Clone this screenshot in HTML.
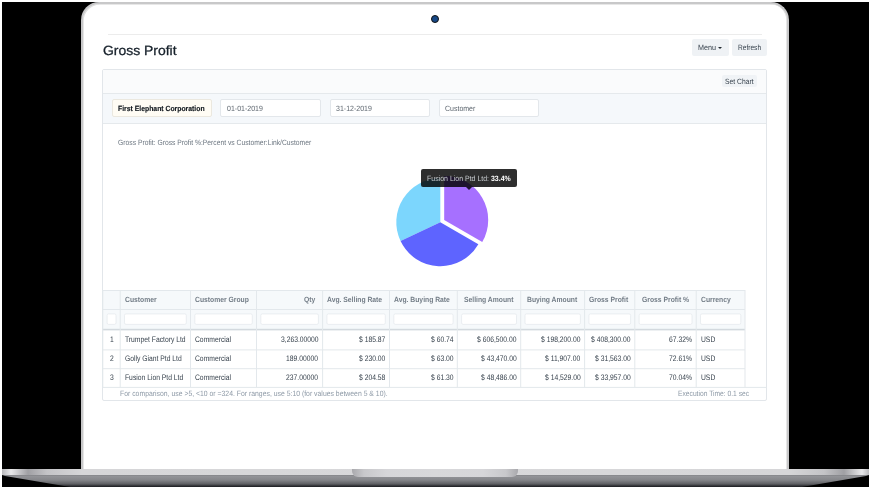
<!DOCTYPE html>
<html><head><meta charset="utf-8">
<style>
*{box-sizing:border-box;margin:0;padding:0}
html,body{width:870px;height:490px;overflow:hidden;background:#fff}
body{position:relative;font-family:"Liberation Sans",sans-serif}
.a{position:absolute}
.t{position:absolute;white-space:pre;line-height:1;transform-origin:0 0;text-rendering:geometricPrecision}
</style></head><body>
<!-- black backdrop -->
<div class="a" style="left:2px;top:2px;width:867px;height:485px;background:#000"></div>
<!-- lid -->
<div class="a" style="left:81px;top:2px;width:708px;height:467px;background:#fff;border:2.9px solid #c8c8c9;border-top-width:2.5px;border-bottom:none;border-radius:18px 18px 0 0;box-shadow:inset 0.8px 0.8px 0 #e0e0e0,inset -0.8px 0 0 #e0e0e0"></div>
<!-- camera -->
<div class="a" style="left:431.1px;top:14.8px;width:8px;height:8px;border-radius:50%;background:#174886;border:1.9px solid #111"></div>
<!-- screen top line -->
<div class="a" style="left:108px;top:34px;width:654px;height:1px;background:#ececec"></div>

<!-- base dark -->
<div class="a" style="left:2px;top:475px;width:867px;height:12px;background:linear-gradient(#7e7f83 0px,#939498 1px,#85868a 5px,#5e5f63 9px,#2c2d31 11px,#1d1e22 12px);clip-path:polygon(0 0,867px 0,864px 1px,800px 12px,68px 12px,3px 1px)"></div>
<!-- base strip -->
<div class="a" style="left:2px;top:469px;width:867px;height:6px;background:linear-gradient(90deg,#b9b9bc 0px,#e9e9eb 9px,#a0a0a4 26px,#c4c4c7 45px,#d6d6d8 80px,#d8d8da 50%,#d6d6d8 787px,#c4c4c7 822px,#a0a0a4 842px,#e9e9eb 860px,#b9b9bc 867px)"></div>
<!-- notch -->
<div class="a" style="left:352px;top:469px;width:166px;height:8px;border-radius:0 0 6px 6px;background:linear-gradient(90deg,#a9a9ad 0px,#c8c8cb 12px,#d6d6d9 35px,#d8d8da 50%,#d6d6d9 131px,#c8c8cb 154px,#a9a9ad 166px)"></div>

<!-- page header buttons -->
<div class="a" style="left:692px;top:39px;width:37px;height:17px;background:#eff2f5;border-radius:2px"></div>
<div class="a" style="left:731.5px;top:39px;width:35px;height:17px;background:#eff2f5;border-radius:2px"></div>
<!-- caret -->
<div class="a" style="left:717.9px;top:47.1px;width:0;height:0;border-left:2.4px solid transparent;border-right:2.4px solid transparent;border-top:2.4px solid #1f272e"></div>

<!-- report panel -->
<div class="a" style="left:102px;top:69px;width:665px;height:332px;border:1px solid #e2e6ea;border-radius:2px;background:#fff"></div>
<!-- toolbar -->
<div class="a" style="left:103px;top:70px;width:663px;height:23.5px;background:#fafbfc;border-bottom:1px solid #e5e9ec"></div>
<div class="a" style="left:722px;top:75px;width:35px;height:12px;background:#f0f3f6;border-radius:2px"></div>
<!-- filter area -->
<div class="a" style="left:103px;top:93.5px;width:663px;height:30px;background:#f5f8fb;border-bottom:1px solid #e5e9ec"></div>
<div class="a" style="left:111.5px;top:99.2px;width:100px;height:18.2px;background:#fffcf4;border:1px solid #ebe8df;border-radius:2px"></div>
<div class="a" style="left:220.3px;top:99.2px;width:100.7px;height:18.2px;background:#fff;border:1px solid #e3e7eb;border-radius:2px"></div>
<div class="a" style="left:329.6px;top:99.2px;width:100.4px;height:18.2px;background:#fff;border:1px solid #e3e7eb;border-radius:2px"></div>
<div class="a" style="left:438.8px;top:99.2px;width:100.6px;height:18.2px;background:#fff;border:1px solid #e3e7eb;border-radius:2px"></div>

<!-- pie -->
<svg class="a" style="left:0;top:0" width="870" height="490" viewBox="0 0 870 490">
<path d="M440.30,222.20 L440.30,178.20 A44.0,44.0 0 0 0 400.56,241.09 Z" fill="#7cd6fd"/>
<path d="M440.30,222.20 L400.56,241.09 A44.0,44.0 0 0 0 478.37,244.26 Z" fill="#5e64ff"/>
<path d="M444.20,219.95 L482.27,242.01 A44.0,44.0 0 0 0 444.20,175.95 Z" fill="#a670ff"/>
</svg>

<!-- table -->
<div class="a" style="left:102.8px;top:290px;width:642.2px;height:39px;background:#f6f9fb"></div>
<svg class="a" style="left:0;top:0" width="870" height="490" viewBox="0 0 870 490">
<rect x="102.8" y="290.0" width="642.2" height="1" fill="#e3e8ec"/>
<rect x="102.8" y="309.0" width="642.2" height="1" fill="#e3e8ec"/>
<rect x="102.8" y="349.4" width="642.2" height="1" fill="#e3e8ec"/>
<rect x="102.8" y="368.2" width="642.2" height="1" fill="#e3e8ec"/>
<rect x="102.8" y="328.8" width="642.2" height="1.6" fill="#d3d9de"/>
<rect x="102.5" y="386.9" width="664" height="1" fill="#e3e8ec"/>
<rect x="102.3" y="290" width="1" height="97.2" fill="#e3e8ec"/>
<rect x="119.7" y="290" width="1" height="97.2" fill="#e3e8ec"/>
<rect x="190.0" y="290" width="1" height="97.2" fill="#e3e8ec"/>
<rect x="256.0" y="290" width="1" height="97.2" fill="#e3e8ec"/>
<rect x="322.1" y="290" width="1" height="97.2" fill="#e3e8ec"/>
<rect x="389.0" y="290" width="1" height="97.2" fill="#e3e8ec"/>
<rect x="456.8" y="290" width="1" height="97.2" fill="#e3e8ec"/>
<rect x="520.2" y="290" width="1" height="97.2" fill="#e3e8ec"/>
<rect x="584.1" y="290" width="1" height="97.2" fill="#e3e8ec"/>
<rect x="634.3" y="290" width="1" height="97.2" fill="#e3e8ec"/>
<rect x="695.7" y="290" width="1" height="97.2" fill="#e3e8ec"/>
<rect x="744.5" y="290" width="1" height="97.2" fill="#e3e8ec"/>
<rect x="107.10" y="313.9" width="8.90" height="10.5" rx="1.5" fill="#fff" stroke="#e6eaee" stroke-width="0.8"/>
<rect x="124.50" y="313.9" width="61.80" height="10.5" rx="1.5" fill="#fff" stroke="#e6eaee" stroke-width="0.8"/>
<rect x="194.80" y="313.9" width="57.50" height="10.5" rx="1.5" fill="#fff" stroke="#e6eaee" stroke-width="0.8"/>
<rect x="260.80" y="313.9" width="57.60" height="10.5" rx="1.5" fill="#fff" stroke="#e6eaee" stroke-width="0.8"/>
<rect x="326.90" y="313.9" width="58.40" height="10.5" rx="1.5" fill="#fff" stroke="#e6eaee" stroke-width="0.8"/>
<rect x="393.80" y="313.9" width="59.30" height="10.5" rx="1.5" fill="#fff" stroke="#e6eaee" stroke-width="0.8"/>
<rect x="461.60" y="313.9" width="54.90" height="10.5" rx="1.5" fill="#fff" stroke="#e6eaee" stroke-width="0.8"/>
<rect x="525.00" y="313.9" width="55.40" height="10.5" rx="1.5" fill="#fff" stroke="#e6eaee" stroke-width="0.8"/>
<rect x="588.90" y="313.9" width="41.70" height="10.5" rx="1.5" fill="#fff" stroke="#e6eaee" stroke-width="0.8"/>
<rect x="639.10" y="313.9" width="52.90" height="10.5" rx="1.5" fill="#fff" stroke="#e6eaee" stroke-width="0.8"/>
<rect x="700.50" y="313.9" width="40.30" height="10.5" rx="1.5" fill="#fff" stroke="#e6eaee" stroke-width="0.8"/>
</svg>

<!-- tooltip -->
<div class="a" style="left:421.3px;top:169px;width:95.5px;height:18.1px;background:rgba(0,0,0,0.82);border-radius:2px"></div>
<div class="a" style="left:465.7px;top:187.1px;width:0;height:0;border-left:3.5px solid transparent;border-right:3.5px solid transparent;border-top:3px solid rgba(0,0,0,0.82)"></div>

<div class="a" style="left:0;top:0;width:870px;height:490px;filter:blur(0.2px)">
<div class="t" style="left:102.60px;top:43.66px;font-size:13.4px;font-weight:normal;color:#17212b;-webkit-text-stroke:0.3px #17212b;transform:scaleX(1.0405)">Gross Profit</div>
<div class="t" style="left:697.90px;top:44.08px;font-size:7.7px;font-weight:normal;color:#36414c;transform:scaleX(0.9345)">Menu</div>
<div class="t" style="left:737.60px;top:44.08px;font-size:7.7px;font-weight:normal;color:#36414c;transform:scaleX(0.8568)">Refresh</div>
<div class="t" style="left:725.40px;top:77.68px;font-size:7.7px;font-weight:normal;color:#36414c;transform:scaleX(0.8793)">Set Chart</div>
<div class="t" style="left:118.10px;top:104.55px;font-size:7.5px;font-weight:bold;color:#12181e;-webkit-text-stroke:0.15px #12181e;transform:scaleX(0.9116)">First Elephant Corporation</div>
<div class="t" style="left:226.90px;top:104.68px;font-size:7.7px;font-weight:normal;color:#5d666f;transform:scaleX(0.9114)">01-01-2019</div>
<div class="t" style="left:336.40px;top:104.68px;font-size:7.7px;font-weight:normal;color:#5d666f;transform:scaleX(0.9114)">31-12-2019</div>
<div class="t" style="left:445.10px;top:104.68px;font-size:7.7px;font-weight:normal;color:#5d666f;transform:scaleX(0.9108)">Customer</div>
<div class="t" style="left:117.50px;top:138.68px;font-size:7.7px;font-weight:normal;color:#6c7680;transform:scaleX(0.8781)">Gross Profit: Gross Profit %:Percent vs Customer:Link/Customer</div>
<div class="t" style="left:120.20px;top:390.18px;font-size:7.7px;font-weight:normal;color:#8d99a6;transform:scaleX(0.8916)">For comparison, use &gt;5, &lt;10 or =324. For ranges, use 5:10 (for values between 5 &amp; 10).</div>
<div class="t" style="left:677.80px;top:390.38px;font-size:7.7px;font-weight:normal;color:#8d99a6;transform:scaleX(0.8710)">Execution Time: 0.1 sec</div>
<div class="t" style="left:124.80px;top:296.45px;font-size:7.5px;font-weight:bold;color:#737d87;transform:scaleX(0.9040)">Customer</div>
<div class="t" style="left:195.10px;top:296.45px;font-size:7.5px;font-weight:bold;color:#737d87;transform:scaleX(0.9040)">Customer Group</div>
<div class="t" style="left:304.30px;top:296.45px;font-size:7.5px;font-weight:bold;color:#737d87;transform:scaleX(0.9040)">Qty</div>
<div class="t" style="left:327.37px;top:296.45px;font-size:7.5px;font-weight:bold;color:#737d87;transform:scaleX(0.9040)">Avg. Selling Rate</div>
<div class="t" style="left:394.42px;top:296.45px;font-size:7.5px;font-weight:bold;color:#737d87;transform:scaleX(0.9040)">Avg. Buying Rate</div>
<div class="t" style="left:464.23px;top:296.45px;font-size:7.5px;font-weight:bold;color:#737d87;transform:scaleX(0.9040)">Selling Amount</div>
<div class="t" style="left:527.39px;top:296.45px;font-size:7.5px;font-weight:bold;color:#737d87;transform:scaleX(0.9040)">Buying Amount</div>
<div class="t" style="left:588.62px;top:296.45px;font-size:7.5px;font-weight:bold;color:#737d87;transform:scaleX(0.9040)">Gross Profit</div>
<div class="t" style="left:642.11px;top:296.45px;font-size:7.5px;font-weight:bold;color:#737d87;transform:scaleX(0.9040)">Gross Profit %</div>
<div class="t" style="left:700.80px;top:296.45px;font-size:7.5px;font-weight:bold;color:#737d87;transform:scaleX(0.9040)">Currency</div>
<div class="t" style="left:109.62px;top:335.83px;font-size:8.0px;font-weight:normal;color:#36414c;transform:scaleX(0.8438)">1</div>
<div class="t" style="left:124.80px;top:335.83px;font-size:8.0px;font-weight:normal;color:#36414c;transform:scaleX(0.8437)">Trumpet Factory Ltd</div>
<div class="t" style="left:195.10px;top:335.83px;font-size:8.0px;font-weight:normal;color:#36414c;transform:scaleX(0.8438)">Commercial</div>
<div class="t" style="left:280.86px;top:335.83px;font-size:8.0px;font-weight:normal;color:#36414c;transform:scaleX(0.8437)">3,263.00000</div>
<div class="t" style="left:359.02px;top:335.83px;font-size:8.0px;font-weight:normal;color:#36414c;transform:scaleX(0.8438)">$ 185.87</div>
<div class="t" style="left:430.58px;top:335.83px;font-size:8.0px;font-weight:normal;color:#36414c;transform:scaleX(0.8438)">$ 60.74</div>
<div class="t" style="left:477.09px;top:335.83px;font-size:8.0px;font-weight:normal;color:#36414c;transform:scaleX(0.8437)">$ 606,500.00</div>
<div class="t" style="left:540.99px;top:335.83px;font-size:8.0px;font-weight:normal;color:#36414c;transform:scaleX(0.8437)">$ 198,200.00</div>
<div class="t" style="left:591.19px;top:335.83px;font-size:8.0px;font-weight:normal;color:#36414c;transform:scaleX(0.8437)">$ 408,300.00</div>
<div class="t" style="left:669.11px;top:335.83px;font-size:8.0px;font-weight:normal;color:#36414c;transform:scaleX(0.8438)">67.32%</div>
<div class="t" style="left:700.80px;top:335.83px;font-size:8.0px;font-weight:normal;color:#36414c;transform:scaleX(0.8438)">USD</div>
<div class="t" style="left:109.62px;top:355.13px;font-size:8.0px;font-weight:normal;color:#36414c;transform:scaleX(0.8438)">2</div>
<div class="t" style="left:124.80px;top:355.13px;font-size:8.0px;font-weight:normal;color:#36414c;transform:scaleX(0.8438)">Golly Giant Ptd Ltd</div>
<div class="t" style="left:195.10px;top:355.13px;font-size:8.0px;font-weight:normal;color:#36414c;transform:scaleX(0.8438)">Commercial</div>
<div class="t" style="left:286.49px;top:355.13px;font-size:8.0px;font-weight:normal;color:#36414c;transform:scaleX(0.8437)">189.00000</div>
<div class="t" style="left:359.02px;top:355.13px;font-size:8.0px;font-weight:normal;color:#36414c;transform:scaleX(0.8438)">$ 230.00</div>
<div class="t" style="left:430.58px;top:355.13px;font-size:8.0px;font-weight:normal;color:#36414c;transform:scaleX(0.8438)">$ 63.00</div>
<div class="t" style="left:480.84px;top:355.13px;font-size:8.0px;font-weight:normal;color:#36414c;transform:scaleX(0.8438)">$ 43,470.00</div>
<div class="t" style="left:545.24px;top:355.13px;font-size:8.0px;font-weight:normal;color:#36414c;transform:scaleX(0.8438)">$ 11,907.00</div>
<div class="t" style="left:594.94px;top:355.13px;font-size:8.0px;font-weight:normal;color:#36414c;transform:scaleX(0.8438)">$ 31,563.00</div>
<div class="t" style="left:669.11px;top:355.13px;font-size:8.0px;font-weight:normal;color:#36414c;transform:scaleX(0.8438)">72.61%</div>
<div class="t" style="left:700.80px;top:355.13px;font-size:8.0px;font-weight:normal;color:#36414c;transform:scaleX(0.8438)">USD</div>
<div class="t" style="left:109.62px;top:374.03px;font-size:8.0px;font-weight:normal;color:#36414c;transform:scaleX(0.8438)">3</div>
<div class="t" style="left:124.80px;top:374.03px;font-size:8.0px;font-weight:normal;color:#36414c;transform:scaleX(0.8438)">Fusion Lion Ptd Ltd</div>
<div class="t" style="left:195.10px;top:374.03px;font-size:8.0px;font-weight:normal;color:#36414c;transform:scaleX(0.8438)">Commercial</div>
<div class="t" style="left:286.49px;top:374.03px;font-size:8.0px;font-weight:normal;color:#36414c;transform:scaleX(0.8437)">237.00000</div>
<div class="t" style="left:359.02px;top:374.03px;font-size:8.0px;font-weight:normal;color:#36414c;transform:scaleX(0.8438)">$ 204.58</div>
<div class="t" style="left:430.58px;top:374.03px;font-size:8.0px;font-weight:normal;color:#36414c;transform:scaleX(0.8438)">$ 61.30</div>
<div class="t" style="left:480.84px;top:374.03px;font-size:8.0px;font-weight:normal;color:#36414c;transform:scaleX(0.8438)">$ 48,486.00</div>
<div class="t" style="left:544.74px;top:374.03px;font-size:8.0px;font-weight:normal;color:#36414c;transform:scaleX(0.8438)">$ 14,529.00</div>
<div class="t" style="left:594.94px;top:374.03px;font-size:8.0px;font-weight:normal;color:#36414c;transform:scaleX(0.8438)">$ 33,957.00</div>
<div class="t" style="left:669.11px;top:374.03px;font-size:8.0px;font-weight:normal;color:#36414c;transform:scaleX(0.8438)">70.04%</div>
<div class="t" style="left:700.80px;top:374.03px;font-size:8.0px;font-weight:normal;color:#36414c;transform:scaleX(0.8438)">USD</div>
<div class="t" style="left:427.3px;top:174.68px;font-size:7.7px;transform:scaleX(0.9074)"><span style="font-weight:normal;color:#c8ccd0">Fusion Lion Ptd Ltd: </span><span style="font-weight:bold;color:#ffffff">33.4%</span></div>
</div>
</body></html>
